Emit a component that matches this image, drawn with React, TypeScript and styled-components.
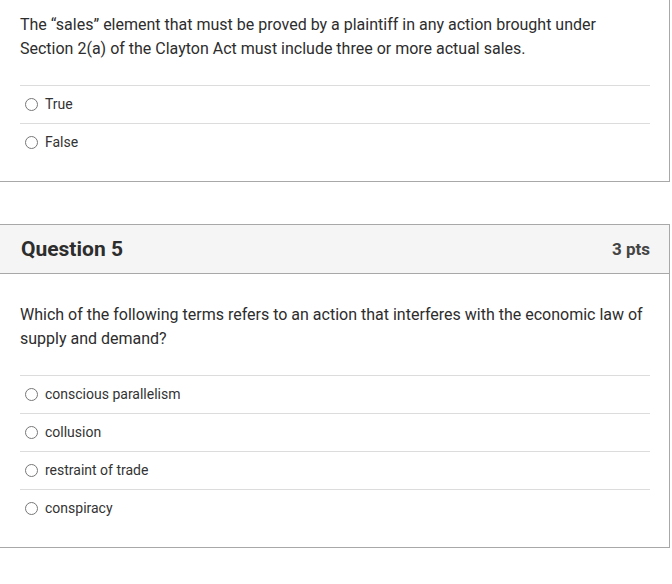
import React from 'react';
import styled, { createGlobalStyle } from 'styled-components';

const GlobalStyle = createGlobalStyle`
  html, body {
    margin: 0;
    padding: 0;
    background: #fff;
  }
  body {
    font-family: Roboto, "Liberation Sans", Arial, sans-serif;
    color: #333;
    overflow: hidden;
  }
`;

const Page = styled.div`
  width: 672px;
  height: 584px;
  overflow: hidden;
  display: flex;
  flex-direction: column;
  gap: 42px;
`;

const Card = styled.div<{ $cut?: boolean }>`
  box-sizing: border-box;
  width: 671px;
  margin-left: -1px;
  margin-top: ${(p) => (p.$cut ? '-1px' : '0')};
  border: 1px solid #a8a8a8;
  background: #fff;
`;

const Header = styled.div`
  display: flex;
  align-items: center;
  justify-content: space-between;
  height: 48px;
  padding: 0 19px 0 21px;
  background: #f5f5f5;
  border-bottom: 1px solid #a8a8a8;
`;

const Title = styled.h2`
  margin: 0;
  font-size: 21px;
  font-weight: 700;
  color: #2d2d2d;
`;

const Points = styled.span`
  font-size: 17px;
  font-weight: 700;
  color: #444;
`;

const Body = styled.div<{ $top: number }>`
  padding: ${(p) => p.$top}px 20px 20px 20px;
`;

const QuestionText = styled.p`
  margin: 0 0 24px 0;
  font-size: 16px;
  line-height: 24px;
  color: #2d2d2d;
`;

const Answers = styled.div`
  display: flex;
  flex-direction: column;
  width: 630px;
`;

const Answer = styled.label`
  box-sizing: border-box;
  display: flex;
  align-items: center;
  gap: 7px;
  height: 38px;
  padding: 0 0 1px 5px;
  border-top: 1px solid #dcdcdc;
  font-size: 14px;
  color: #333;
`;

const Radio = styled.span`
  box-sizing: border-box;
  width: 13px;
  height: 13px;
  border: 1px solid #777;
  border-radius: 50%;
  background: #fff;
  flex: none;
`;

const questions = [
  {
    title: null as string | null,
    pts: '',
    text: 'The \u201csales\u201d element that must be proved by a plaintiff in any action brought under Section 2(a) of the Clayton Act must include three or more actual sales.',
    answers: ['True', 'False'],
  },
  {
    title: 'Question 5',
    pts: '3 pts',
    text: 'Which of the following terms refers to an action that interferes with the economic law of supply and demand?',
    answers: ['conscious parallelism', 'collusion', 'restraint of trade', 'conspiracy'],
  },
];

export default function App() {
  return (
    <>
      <GlobalStyle />
      <Page>
        {questions.map((q, i) => (
          <Card key={i} $cut={!q.title}>
            {q.title && (
              <Header>
                <Title>{q.title}</Title>
                <Points>{q.pts}</Points>
              </Header>
            )}
            <Body $top={q.title ? 29 : 13}>
              <QuestionText>{q.text}</QuestionText>
              <Answers>
                {q.answers.map((a) => (
                  <Answer key={a}>
                    <Radio />
                    {a}
                  </Answer>
                ))}
              </Answers>
            </Body>
          </Card>
        ))}
      </Page>
    </>
  );
}
